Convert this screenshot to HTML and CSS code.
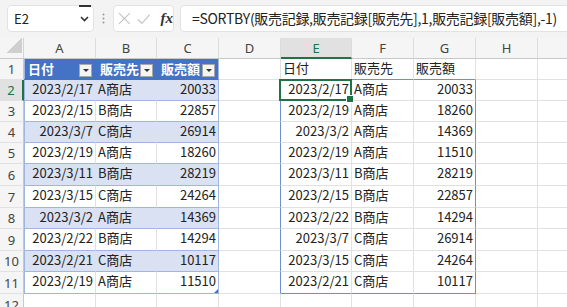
FILE: index.html
```html
<!DOCTYPE html>
<html lang="ja">
<head>
    <meta charset="UTF-8">
    <title>販売記録 - SORTBY</title>
    <link rel="stylesheet" href="styles.css">
</head>
<body>
    <div class="formula-bar">
        <div class="name-box">
            <span>E2</span>
            <svg class="chev" width="9" height="6" viewBox="0 0 9 6"><polyline points="1,1 4.5,4.5 8,1" fill="none" stroke="#333" stroke-width="1.6"/></svg>
        </div>
        <div class="grip">
            <svg width="3" height="11" viewBox="0 0 3 11"><circle cx="1.5" cy="1.5" r="1" fill="#999"/><circle cx="1.5" cy="5.5" r="1" fill="#999"/><circle cx="1.5" cy="9.5" r="1" fill="#999"/></svg>
        </div>
        <div class="fx-box">
            <svg width="13" height="13" viewBox="0 0 13 13"><path d="M1 1 L12 12 M12 1 L1 12" stroke="#c4c4c4" stroke-width="1.2" fill="none"/></svg>
            <svg width="14" height="12" viewBox="0 0 14 12"><path d="M1 6.5 L5 10.5 L13 1.5" stroke="#c4c4c4" stroke-width="1.2" fill="none"/></svg>
            <span class="fx">fx</span>
        </div>
        <div class="formula">=SORTBY(販売記録,販売記録[販売先],1,販売記録[販売額],-1)</div>
    </div>

    <table class="sheet">
        <colgroup>
            <col class="w-rh"><col class="w-a"><col class="w-b"><col class="w-c"><col class="w-d">
            <col class="w-e"><col class="w-f"><col class="w-g"><col class="w-h"><col class="w-i">
        </colgroup>
        <tr class="h21">
            <th class="corner"><span class="tri"></span></th>
            <th class="ch">A</th><th class="ch">B</th><th class="ch">C</th><th class="ch">D</th>
            <th class="ch act">E</th><th class="ch">F</th><th class="ch">G</th><th class="ch">H</th><th class="ch"></th>
        </tr>
        <tr class="h21">
            <th class="rh">1</th>
            <td class="thd ta"><div class="thd-in"><span>日付</span><span class="dd"></span></div></td>
            <td class="thd"><div class="thd-in"><span>販売先</span><span class="dd"></span></div></td>
            <td class="thd tc"><div class="thd-in"><span>販売額</span><span class="dd"></span></div></td>
            <td></td>
            <td class="sp-top">日付</td><td class="sp-top">販売先</td><td class="sp-top">販売額</td><td></td><td></td>
        </tr>
        <tr class="h21">
            <th class="rh act">2</th>
            <td class="tb band ta r">2023/2/17</td><td class="tb band">A商店</td><td class="tb band tc r">20033</td>
            <td class="sp-l"></td>
            <td class="r sel">2023/2/17</td><td>A商店</td><td class="r sp-r">20033</td><td></td><td></td>
        </tr>
        <tr class="h21">
            <th class="rh">3</th>
            <td class="tb ta r">2023/2/15</td><td class="tb">B商店</td><td class="tb tc r">22857</td>
            <td class="sp-l"></td>
            <td class="r">2023/2/19</td><td>A商店</td><td class="r sp-r">18260</td><td></td><td></td>
        </tr>
        <tr class="h21">
            <th class="rh">4</th>
            <td class="tb band ta r">2023/3/7</td><td class="tb band">C商店</td><td class="tb band tc r">26914</td>
            <td class="sp-l"></td>
            <td class="r">2023/3/2</td><td>A商店</td><td class="r sp-r">14369</td><td></td><td></td>
        </tr>
        <tr class="h21">
            <th class="rh">5</th>
            <td class="tb ta r">2023/2/19</td><td class="tb">A商店</td><td class="tb tc r">18260</td>
            <td class="sp-l"></td>
            <td class="r">2023/2/19</td><td>A商店</td><td class="r sp-r">11510</td><td></td><td></td>
        </tr>
        <tr class="h22">
            <th class="rh">6</th>
            <td class="tb band ta r">2023/3/11</td><td class="tb band">B商店</td><td class="tb band tc r">28219</td>
            <td class="sp-l"></td>
            <td class="r">2023/3/11</td><td>B商店</td><td class="r sp-r">28219</td><td></td><td></td>
        </tr>
        <tr class="h22">
            <th class="rh">7</th>
            <td class="tb ta r">2023/3/15</td><td class="tb">C商店</td><td class="tb tc r">24264</td>
            <td class="sp-l"></td>
            <td class="r">2023/2/15</td><td>B商店</td><td class="r sp-r">22857</td><td></td><td></td>
        </tr>
        <tr class="h21">
            <th class="rh">8</th>
            <td class="tb band ta r">2023/3/2</td><td class="tb band">A商店</td><td class="tb band tc r">14369</td>
            <td class="sp-l"></td>
            <td class="r">2023/2/22</td><td>B商店</td><td class="r sp-r">14294</td><td></td><td></td>
        </tr>
        <tr class="h22">
            <th class="rh">9</th>
            <td class="tb ta r">2023/2/22</td><td class="tb">B商店</td><td class="tb tc r">14294</td>
            <td class="sp-l"></td>
            <td class="r">2023/3/7</td><td>C商店</td><td class="r sp-r">26914</td><td></td><td></td>
        </tr>
        <tr class="h21">
            <th class="rh">10</th>
            <td class="tb band ta r">2023/2/21</td><td class="tb band">C商店</td><td class="tb band tc r">10117</td>
            <td class="sp-l"></td>
            <td class="r">2023/3/15</td><td>C商店</td><td class="r sp-r">24264</td><td></td><td></td>
        </tr>
        <tr class="h22">
            <th class="rh">11</th>
            <td class="tb ta r">2023/2/19</td><td class="tb">A商店</td><td class="tb tc r rs">11510</td>
            <td class="sp-l"></td>
            <td class="r sp-b">2023/2/21</td><td class="sp-b">C商店</td><td class="r sp-r sp-b">10117</td><td></td><td></td>
        </tr>
        <tr class="h22">
            <th class="rh">12</th>
            <td></td><td></td><td></td><td></td><td></td><td></td><td></td><td></td><td></td>
        </tr>
    </table>
</body>
</html>
```

FILE: styles.css
```css
* {
    margin: 0;
    padding: 0;
    box-sizing: border-box;
}

body {
    font-family: "Noto Sans CJK JP", "Noto Sans", sans-serif;
    background: #fff;
    color: #222;
    width: 567px;
    height: 307px;
    overflow: hidden;
}

/* formula bar */

.formula-bar {
    height: 38px;
    background: #f3f3f3;
    display: flex;
    align-items: flex-start;
    padding: 5px 0 0 7px;
    width: 580px;
}

.name-box {
    position: relative;
    width: 87px;
    height: 27px;
    background: #fff;
    border: 1px solid #e2e2e2;
    border-radius: 4px;
    display: flex;
    align-items: center;
    justify-content: space-between;
    padding: 0 4px 0 6px;
    font-size: 13px;
}

.name-box::after {
    content: "";
    position: absolute;
    top: -1px;
    right: 2px;
    width: 12px;
    height: 2px;
    background: #333;
}

.grip {
    width: 19px;
    height: 27px;
    display: flex;
    align-items: center;
    justify-content: center;
}

.fx-box {
    width: 61px;
    height: 27px;
    background: #fff;
    border: 1px solid #e2e2e2;
    border-radius: 4px;
    display: flex;
    align-items: center;
    gap: 6px;
    padding-left: 4px;
}

.fx {
    font-family: "Liberation Serif", serif;
    font-style: italic;
    font-weight: bold;
    font-size: 15px;
    color: #333;
    margin-left: 4px;
}

.formula {
    flex: 1;
    height: 27px;
    margin-left: 6px;
    background: #fff;
    border: 1px solid #e2e2e2;
    border-radius: 4px;
    padding-left: 11px;
    font-size: 14px;
    letter-spacing: -0.3px;
    line-height: 25px;
    white-space: nowrap;
    overflow: hidden;
}

/* sheet grid */

.sheet {
    border-collapse: separate;
    border-spacing: 0;
    table-layout: fixed;
    width: 600px;
    font-size: 13px;
}

.w-rh { width: 24px; }
.w-a { width: 72px; }
.w-b { width: 61px; }
.w-c { width: 62px; }
.w-d { width: 62px; }
.w-e { width: 71px; }
.w-f { width: 62px; }
.w-g { width: 62px; }
.w-h { width: 62px; }
.w-i { width: 62px; }

.h21 { height: 21px; }
.h22 { height: 22px; }

.sheet td {
    border-right: 1px solid #e1e1e1;
    border-bottom: 1px solid #e1e1e1;
    padding: 0 2px;
    line-height: 18px;
    vertical-align: top;
    white-space: nowrap;
    overflow: hidden;
}

.sheet th {
    font-family: "Noto Sans", sans-serif;
    font-weight: normal;
    font-size: 13px;
    color: #444;
    background: #f5f5f5;
    text-align: center;
}

.corner {
    border-right: 1px solid #d4d4d4;
    border-bottom: 1px solid #c8c8c8;
    vertical-align: bottom;
    text-align: right !important;
}

.tri {
    display: inline-block;
    width: 15px;
    height: 15px;
    margin: 0 1px 1px 0;
    background: linear-gradient(to top left, #cfcfcf 50%, transparent 50%);
}

.ch {
    border-right: 1px solid #dcdcdc;
    border-bottom: 1px solid #c8c8c8;
}

.ch.act {
    background: #e1e1e1;
    color: #217346;
    border-bottom: 2px solid #217346;
}

.rh {
    border-right: 1px solid #c8c8c8;
    border-bottom: 1px solid #e1e1e1;
}

.rh.act {
    background: #e1e1e1;
    color: #217346;
    border-right: 2px solid #217346;
}

.r {
    text-align: right;
}

/* table 販売記録 */

.sheet .thd {
    background: #4472c4;
    color: #fff;
    font-weight: bold;
    border-right-color: #4472c4;
    border-bottom-color: #4472c4;
    padding: 0 3px 0 4px;
}

.thd-in {
    display: flex;
    align-items: center;
    justify-content: space-between;
    height: 20px;
}

.dd {
    position: relative;
    width: 13px;
    height: 13px;
    background: #f4f4f4;
    border: 1px solid #a8a8a8;
    margin-top: 3px;
}

.dd::after {
    content: "";
    position: absolute;
    left: 3px;
    top: 4px;
    border-left: 3px solid transparent;
    border-right: 3px solid transparent;
    border-top: 3px solid #333;
}

.sheet .tb {
    border-bottom-color: #9fb6e2;
}

.sheet .band {
    background: #d9e1f2;
    border-right-color: #d9e1f2;
}

.sheet .ta {
    box-shadow: inset 1px 0 #9fb6e2;
}

.sheet .tc {
    border-right-color: #9fb6e2;
}

.rs {
    position: relative;
}

.rs::after {
    content: "";
    position: absolute;
    right: 0;
    bottom: 0;
    border-left: 4px solid transparent;
    border-bottom: 4px solid #4472c4;
}

/* spill range E2:G11 */

.sheet .sp-top,
.sheet .sp-b {
    border-bottom-color: #6d90d3;
}

.sheet .sp-l,
.sheet .sp-r {
    border-right-color: #6d90d3;
}

.sheet .sel {
    position: relative;
    overflow: visible;
}

.sel::after {
    content: "";
    position: absolute;
    left: -2px;
    top: -1px;
    right: -1px;
    bottom: -1px;
    border: 2px solid #217346;
}

.sel::before {
    content: "";
    position: absolute;
    right: -3px;
    bottom: -3px;
    width: 6px;
    height: 6px;
    background: #217346;
    border: 1px solid #fff;
    z-index: 1;
}
```
